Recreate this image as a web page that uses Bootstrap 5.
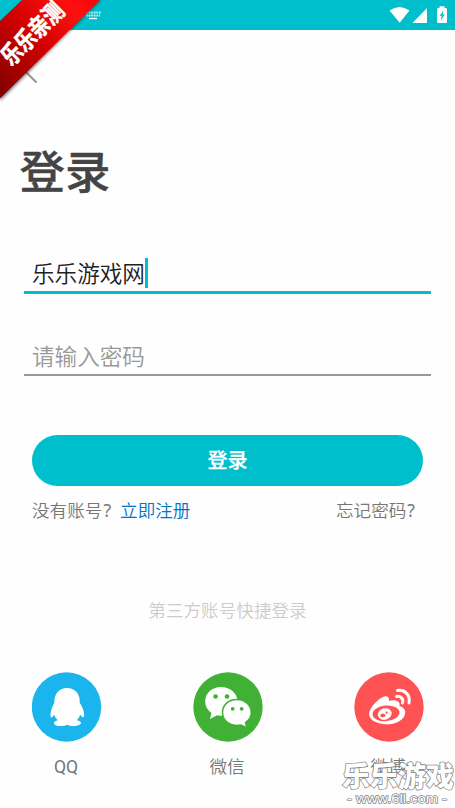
<!DOCTYPE html>
<html lang="zh-CN">
<head>
<meta charset="utf-8">
<meta name="viewport" content="width=device-width, initial-scale=1">
<title>登录</title>
<link href="https://cdn.jsdelivr.net/npm/bootstrap@5.3.0/dist/css/bootstrap.min.css" rel="stylesheet">
<style>
:root { --teal: #00bfcc; }
body { font-family: "Noto Sans CJK SC", sans-serif; font-weight: 350; background: #fefefe; color: #777; }
.screen { width: 455px; height: 808px; overflow: hidden; }
.status-bar { height: 30px; background: var(--teal); }
.top-nav { height: 90px; }
.ribbon { left: 0; top: 0; z-index: 3; }
.page-title { font-size: 45.5px; font-weight: 500; line-height: 98px; height: 110px; color: #444; padding-left: 19.5px; -webkit-text-stroke: .3px #444; }
.field { height: 82px; margin: 0 24px; padding: 0 8px; font-size: 22.6px; }
.field-name { height: 64px; border-bottom: 3px solid var(--teal); color: #212121; }
.field-pass { height: 82px; border-bottom: 2px solid #999; color: #999; }
.field-text { line-height: 37px; }
.caret { width: 3px; height: 30px; background: var(--teal); margin-bottom: 3px; }
.login-btn, .login-btn:hover { height: 51px; background: var(--teal); color: #fff; font-size: 20px; font-weight: 500; margin: 59px 32px 0; padding: 0 0 1px; line-height: 1; -webkit-text-stroke: .3px #fff; }
.small-line { font-size: 17.6px; line-height: 26px; }
.account-row { padding: 11px 40px 0 32px; }
.reg-link { color: #0075cc; margin-left: 9px; }
.third { color: #ccc; margin-top: 74px; height: 75px; }
.social-row { padding: 0 31px 0 32px; }
.social { width: 70px; line-height: 26px; font-size: 17.6px; }
.social svg { margin-bottom: 11px; }
.social-name { margin-right: 2px; }
.latin { font-family: Roboto, sans-serif; font-weight: 400; }
.q-mark { font-family: "Noto Sans", sans-serif; font-weight: 400; margin-left: 1px; }
.site-mark { right: 0; bottom: 0; z-index: 3; }
</style>
<script src="https://cdn.jsdelivr.net/npm/bootstrap@5.3.0/dist/js/bootstrap.bundle.min.js"></script>
</head>
<body>
<main class="screen position-relative">
  <header class="status-bar d-flex justify-content-between">
    <svg width="120" height="30" viewBox="0 0 120 30" fill="none" stroke="#fff" aria-hidden="true">
      <path d="M86 12.5H101M86 15.5H100" stroke-width="2" stroke-dasharray="1.8 .8" opacity=".75"/><path d="M89 18.5H97" stroke-width="1.3"/>
    </svg>
    <svg width="80" height="30" viewBox="0 0 80 30" aria-hidden="true">
      <path fill="#fff" d="M14.5 10.6Q24.5 3.4 34.5 10.6L24.7 22.8ZM52 8V23H37.5ZM64.5 8V6.3h5V8h1.2q1.3 0 1.3 1.3v12.4q0 1.3-1.3 1.3h-7.4q-1.3 0-1.3-1.3V9.300Q62 8 63.300 8Z"/>
      <path fill="#00bfcc" d="M68.500 10.300L64.600 15.700H66.700L65.700 20.700L69.800 14.600H67.700Z"/>
    </svg>
  </header>
  <nav class="top-nav">
    <svg width="50" height="60" viewBox="0 30 50 60" fill="none" aria-hidden="true"><path d="M23 69L36.500 82.500" stroke="#999" stroke-width="2.200"/></svg>
  </nav>
  <h1 class="page-title mb-0">登录</h1>
  <div class="field field-name d-flex align-items-end"><span class="field-text">乐乐游戏网</span><span class="caret"></span></div>
  <div class="field field-pass d-flex align-items-end"><span class="field-text">请输入密码</span></div>
  <div class="d-grid"><button type="button" class="login-btn btn rounded-pill border-0">登录</button></div>
  <div class="account-row small-line d-flex justify-content-between">
    <span>没有账号<span class="q-mark">?</span><a class="reg-link text-decoration-none" href="#">立即注册</a></span>
    <span>忘记密码<span class="q-mark">?</span></span>
  </div>
  <div class="third small-line text-center">第三方账号快捷登录</div>
  <div class="social-row d-flex justify-content-between text-center">
    <div class="social">
      <svg class="d-block" width="70" height="70" viewBox="0 0 70 70" aria-hidden="true"><circle cx="34.500" cy="35" r="34.700" fill="#1bb5ed"/>
      <path fill="#fff" transform="translate(-.5 0)" d="M35.500 16C27 16 22.500 22.500 22.900 30.500C20.500 35 18.600 40 19 44.200Q20 47.500 22.600 42.800Q23.700 46 26.500 48.300Q22.400 49.200 22.400 51.200C23 54.800 33 54.500 35.800 52.700C39 54.700 48.800 54.600 49.500 51Q49.200 49 45.300 48.300Q47.700 46 48.800 42.800Q52 47.500 52.700 43.500C53 39 50.500 35 48.200 30.500C48.800 22.500 44 16 35.500 16Z"/></svg><span class="social-name latin">QQ</span>
    </div>
    <div class="social">
      <svg class="d-block" width="70" height="70" viewBox="0 0 70 70" aria-hidden="true"><circle cx="35" cy="35" r="34.700" fill="#40b135"/>
      <path fill="#fff" d="M28 15C18.500 15 12.200 21.500 12.200 29.500Q12.200 36.500 18.500 41L17 47L24 43.300C37 46 44.500 38 44.500 29.500C44.500 21.500 37.500 15 28 15Z"/>
      <path fill="#fff" stroke="#40b135" stroke-width="1.500" d="M43.700 27.500C35 27.500 29.500 33.500 29.500 40.500C29.500 48.500 37 55 48 53L54 56L52.500 50.500Q58.500 46.500 58.300 40.300C58 33 52 27.500 43.700 27.500Z"/>
      <g fill="#40b135"><circle cx="22.600" cy="24.500" r="2.300"/><circle cx="34" cy="24.500" r="2.300"/><circle cx="39.700" cy="36.800" r="1.900"/><circle cx="48.700" cy="36.800" r="1.900"/></g></svg><span class="social-name">微信</span>
    </div>
    <div class="social">
      <svg class="d-block" width="70" height="70" viewBox="0 0 70 70" aria-hidden="true"><circle cx="35" cy="35" r="34.700" fill="#ff5252"/>
      <path fill="#fff" d="M15.200 42C15.200 36 25 25 31.500 24.200Q35.500 24 35 29C38.500 27.500 47 28 45.500 34C52 36 52.500 40.500 49.500 45.500C45 51.500 36 53 29 52C21 51 15.200 47.500 15.200 42Z"/>
      <ellipse cx="32" cy="41.300" rx="13.500" ry="7.800" transform="rotate(-5 32 41.300)" fill="#ff5252"/>
      <ellipse cx="30.800" cy="42" rx="7" ry="5.700" transform="rotate(-15 30.800 42)" fill="#fff"/>
      <ellipse cx="28.800" cy="43.300" rx="2.500" ry="1.900" fill="#ff5252"/><circle cx="32.500" cy="40.700" r="1.100" fill="#ff5252"/>
      <path fill="none" stroke="#fff" stroke-width="3" stroke-linecap="round" d="M43.500 18.500C51 17.500 56.500 23 55 31M42.500 24.500C46.500 23.500 50 27 48.500 31"/></svg><span class="social-name">微博</span>
    </div>
  </div>
  <svg class="ribbon position-absolute" width="120" height="105" viewBox="0 0 120 105">
    <defs>
      <linearGradient id="ribbonRed" gradientUnits="userSpaceOnUse" x1="0" y1="90" x2="90" y2="0"><stop offset="0" stop-color="#850000"/><stop offset=".5" stop-color="#d50000"/><stop offset=".85" stop-color="#ff1010"/><stop offset="1" stop-color="#f80808"/></linearGradient>
      <filter id="ribbonShade" x="-20%" y="-20%" width="140%" height="140%"><feGaussianBlur stdDeviation="1.500"/></filter>
    </defs>
    <path d="M22 0H101L0 101V21Z" fill="#000" opacity=".5" filter="url(#ribbonShade)"/>
    <path d="M0 0H22L0 21Z" fill="#00bfcc"/>
    <path d="M22 0H100L0 98.500V21Z" fill="url(#ribbonRed)"/>
    <text transform="translate(32.500 33.500) rotate(-45) scale(.9 1.120)" text-anchor="middle" y="7.700" font-family="Noto Sans CJK SC, sans-serif" font-size="21.500" font-weight="700" fill="#fff" stroke="#fff" stroke-width=".5">乐乐亲测</text>
  </svg>
  <svg class="site-mark position-absolute" width="120" height="52" viewBox="335 756 120 52">
    <g fill="#fff" stroke="#888" paint-order="stroke" stroke-linejoin="round">
      <text x="342" y="787" font-family="Noto Sans CJK SC, sans-serif" font-size="28" font-weight="900" stroke-width="1.600" textLength="112">乐乐游戏</text>
      <text x="347" y="803" font-family="Liberation Sans, sans-serif" font-size="12.500" font-weight="400" stroke-width="1.400" textLength="100" lengthAdjust="spacingAndGlyphs">- www.6ll.com -</text>
    </g>
  </svg>
</main>
</body>
</html>
